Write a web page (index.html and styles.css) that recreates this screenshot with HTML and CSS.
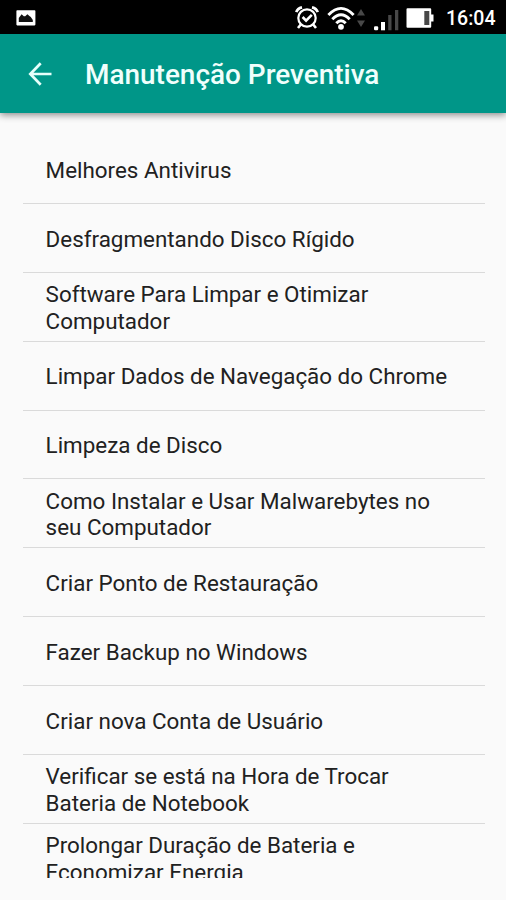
FILE: index.html
```html
<!DOCTYPE html>
<html lang="pt-BR">
<head>
<meta charset="utf-8">
<title>Manutenção Preventiva</title>
<link rel="stylesheet" href="styles.css">
</head>
<body>
<div class="status">
  <svg class="picture" width="20" height="16" viewBox="0 0 20 16"><rect x=".4" y=".2" width="19" height="15.2" rx=".8" fill="#fff"/><path d="M2.8 12V8l2.8-3.8 2.2 2 1.4.1 2.2-2.1 2 1.7 1.4 1 2 3V12z" fill="#111"/></svg>
  <svg class="alarm" width="24" height="25" viewBox="0 0 24 25" fill="none" stroke="#fff"><circle cx="12" cy="13" r="8.7" stroke-width="2.2"/><path stroke-width="2.8" d="M1.3 7.2Q2.4 3.4 7 2.3M17 2.3Q21.6 3.4 22.7 7.2"/><path stroke-width="2.6" d="M6 19.3L3 23M18 19.3L21 23M7.6 12l3.5 3.6 5.7-5.7"/></svg>
  <svg class="wifi" width="28" height="24" viewBox="0 0 28 24" fill="none" stroke="#fff" stroke-width="2.9"><path d="M1.4 9Q14-4.2 26.6 9M5.3 13.2Q14 4.2 22.7 13.2M9.3 17.2Q14 12.2 18.7 17.2"/><circle cx="14" cy="20.8" r="2.9" fill="#fff" stroke="none"/></svg>
  <svg class="traffic" width="8" height="18" viewBox="0 0 8 18"><path d="M4 0l4 6.5H0zM4 18l4-6.5H0z" fill="#484848"/></svg>
  <svg class="signal" width="25" height="22" viewBox="0 0 25 22"><rect x="0" y="17.2" width="4.2" height="4" rx="1.2" fill="#fff"/><rect x="7" y="13" width="4" height="8.3" fill="#fff"/><path d="M14.2 6h3.3v15.3h-3.3zM21 1h3.3v20.3H21z" fill="#484848"/></svg>
  <svg class="battery" width="29" height="22" viewBox="0 0 29 22"><path d="M1.5.2h22.7q1 0 1 1v5.3h2.3v7h-2.3v5.3q0 1-1 1H1.5q-1 0-1-1V1.200q0-1 1-1z" fill="#fff"/><path d="M18.300 3h5v14h-5z" fill="#484848"/></svg>
  <span class="clock">16:04</span>
</div>
<header class="bar">
  <svg class="back" width="24" height="24" viewBox="0 0 24 24" fill="none" stroke="#e6fffb" stroke-width="2.7"><path d="M23.500 12H2.400M12.700 1.300L2.300 12l10.400 10.700"/></svg>
  <h1>Manutenção Preventiva</h1>
</header>
<ul class="list">
  <li><span>Melhores Antivirus</span></li>
  <li><span>Desfragmentando Disco Rígido</span></li>
  <li><span>Software Para Limpar e Otimizar<br>Computador</span></li>
  <li><span>Limpar Dados de Navegação do Chrome</span></li>
  <li><span>Limpeza de Disco</span></li>
  <li><span>Como Instalar e Usar Malwarebytes no<br>seu Computador</span></li>
  <li><span>Criar Ponto de Restauração</span></li>
  <li><span>Fazer Backup no Windows</span></li>
  <li><span>Criar nova Conta de Usuário</span></li>
  <li><span>Verificar se está na Hora de Trocar<br>Bateria de Notebook</span></li>
  <li><span>Prolongar Duração de Bateria e<br>Economizar Energia</span></li>
</ul>
</body>
</html>
```
FILE: styles.css
```css
* { box-sizing: border-box; }
body {
  margin: 0;
  height: 900px;
  overflow: hidden;
  background: #fafafa;
  font-family: Roboto, "Liberation Sans", sans-serif;
}
.status {
  display: flex;
  align-items: flex-start;
  height: 34px;
  padding-left: 16px;
  background: #000;
}
.status svg { flex: none; }
.picture { margin-top: 10px; }
.alarm { margin: 5px 0 0 259px; }
.wifi { margin: 6px 0 0 8px; }
.traffic { margin: 9px 0 0 2px; }
.signal { margin: 9px 0 0 9px; }
.battery { margin: 8px 0 0 7px; }
.clock {
  margin: 7px 0 0 11px;
  color: #fff;
  font-size: 19.5px;
  font-weight: 500;
  line-height: 24px;
  white-space: nowrap;
}
.bar {
  display: flex;
  align-items: center;
  height: 79px;
  padding: 2px 0 0 28px;
  background: #009688;
  box-shadow: 0 2px 7px rgba(0, 0, 0, .45);
}
.back { margin-bottom: 2px; }
.bar h1 {
  margin: 0 0 0 33px;
  color: #f0fffc;
  font-size: 27.95px;
  font-weight: 500;
  line-height: 36px;
  white-space: nowrap;
}
.list {
  height: 743px;
  margin: 22px 21px 0 23px;
  padding: 0;
  overflow: hidden;
  list-style: none;
}
.list li {
  display: flex;
  align-items: center;
  height: 68.9px;
  padding: 2px 0 0 22.6px;
  border-bottom: 1px solid #dadada;
  color: #212121;
  font-size: 22.4px;
  line-height: 26.6px;
  white-space: nowrap;
}
```
